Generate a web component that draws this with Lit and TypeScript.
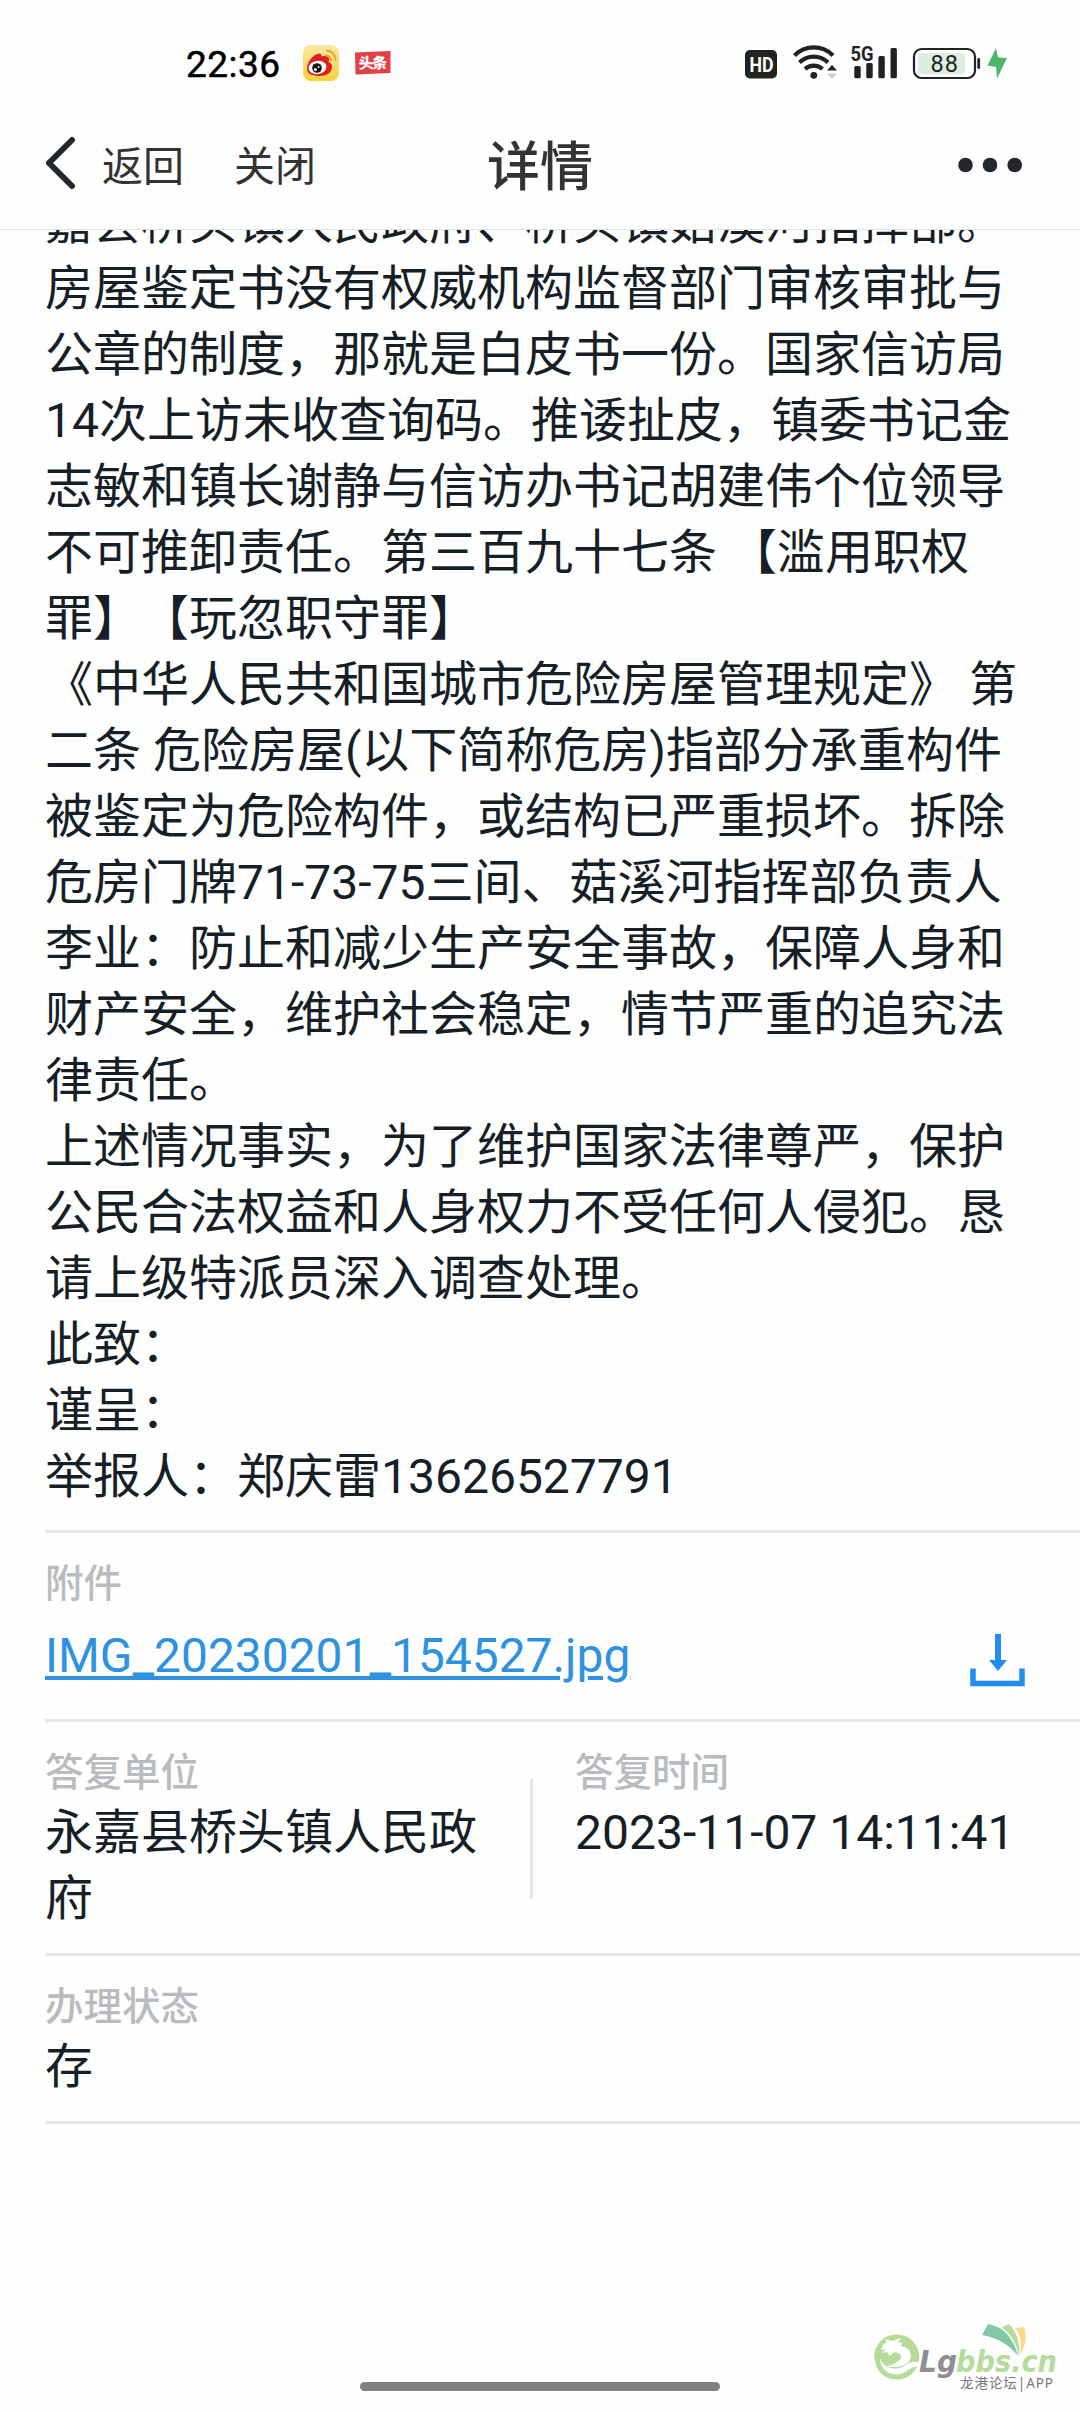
import { LitElement, html, css } from "lit";
import { customElement } from "lit/decorators.js";

const LINES = [
  "嘉县桥头镇人民政府、桥头镇菇溪河指挥部。",
  "房屋鉴定书没有权威机构监督部门审核审批与",
  "公章的制度，那就是白皮书一份。国家信访局",
  "14次上访未收查询码。推诿扯皮，镇委书记金",
  "志敏和镇长谢静与信访办书记胡建伟个位领导",
  "不可推卸责任。第三百九十七条 【滥用职权",
  "罪】【玩忽职守罪】",
  "《中华人民共和国城市危险房屋管理规定》 第",
  "二条 危险房屋(以下简称危房)指部分承重构件",
  "被鉴定为危险构件，或结构已严重损坏。拆除",
  "危房门牌71-73-75三间、菇溪河指挥部负责人",
  "李业：防止和减少生产安全事故，保障人身和",
  "财产安全，维护社会稳定，情节严重的追究法",
  "律责任。",
  "上述情况事实，为了维护国家法律尊严，保护",
  "公民合法权益和人身权力不受任何人侵犯。恳",
  "请上级特派员深入调查处理。",
  "此致：",
  "谨呈：",
  "举报人：郑庆雷13626527791",
];

@customElement("status-bar")
class StatusBar extends LitElement {
  static styles = css`
    :host { display: block; height: 96px; }
    svg { display: block; }
    .t { font-family: Roboto, sans-serif; }
    .cjk { font-family: "Noto Sans CJK SC", sans-serif; font-weight: 900; }
  `;
  render() {
    return html`<svg width="1080" height="96" viewBox="0 0 1080 96">
      <defs>
        <linearGradient id="wb" x1="0" y1="0" x2="0" y2="1">
          <stop offset="0" stop-color="#fbe7a4" /><stop offset="1" stop-color="#fbd03c" />
        </linearGradient>
      </defs>
      <text class="t" x="186" y="77" font-size="37" textLength="94" fill="#000" stroke="#000" stroke-width=".5">22:36</text>
      <rect x="303" y="45" width="36" height="36" rx="8" fill="url(#wb)" />
      <path d="M307 69c0-7 6-14.500 12-15.500 2 0 2.500 1 2.500 3 4-1 7.500-.5 7.500 2.500 0 1 0 2-.5 3 3 1 3.500 3 3.500 5 0 6-6 9-12.500 9S307 74 307 69z" fill="#e02020" />
      <ellipse cx="317.500" cy="67.500" rx="9" ry="6.600" fill="#fff" transform="rotate(-8 317.500 67.500)" />
      <circle cx="317" cy="68" r="4.800" fill="#111" />
      <circle cx="315.400" cy="69.600" r="1.500" fill="#fff" /><circle cx="318.600" cy="67" r=".9" fill="#fff" />
      <path d="M327 50.500a9.500 9.500 0 0 1 8.500 9.500M326 55.500a5 5 0 0 1 5 5" fill="none" stroke="#e5a23a" stroke-width="2" stroke-linecap="round" />
      <path d="M355 52.500 390.500 51V73L355.500 74.500z" fill="#e34046" />
      <text class="cjk" x="358.500" y="68.500" font-size="15" textLength="28.500" fill="#fff" transform="rotate(-1.500 372 63)">头条</text>

      <rect x="745" y="50" width="32" height="28.500" rx="5" fill="#222" />
      <text class="t" x="749.500" y="71.500" font-size="20.500" font-weight="700" textLength="24" lengthAdjust="spacingAndGlyphs" fill="#fff">HD</text>
      <g fill="none" stroke="#222" stroke-width="4.200">
        <path d="M794.500 55.500a27 27 0 0 1 38.500 0" />
        <path d="M799.500 62.500a20 20 0 0 1 28.500 0" />
        <path d="M805 69a13 13 0 0 1 17.500 0" />
      </g>
      <circle cx="813.800" cy="75.300" r="3.400" fill="#222" />
      <path d="M827 70.500 832 65l5 5.500z" fill="#222" /><path d="M827 73.500 832 79l5-5.500z" fill="#ccc" />
      <text class="t" x="850.500" y="61" font-size="20.500" font-weight="700" textLength="23" lengthAdjust="spacingAndGlyphs" fill="#222">5G</text>
      <g fill="#222">
        <rect x="854.300" y="66" width="6.400" height="12.300" rx="1.500" /><rect x="866.300" y="63" width="6.400" height="15.300" rx="1.500" />
        <rect x="878.400" y="56" width="6.400" height="22.300" rx="1.500" /><rect x="890.500" y="48" width="6.400" height="30.300" rx="1.500" />
      </g>
      <rect x="914" y="49" width="61" height="29" rx="7.500" fill="#fff" stroke="#222" stroke-width="2.200" />
      <rect x="918" y="53" width="47" height="21.300" rx="3" fill="#dceee0" />
      <rect x="977.300" y="58" width="2.800" height="11" rx="1.400" fill="#222" />
      <text class="t" x="930.500" y="72" font-size="23.500" textLength="27.500" fill="#222">88</text>
      <path d="M996 48 987.500 65.500 996 67 997 78.500 1007 58 998 57.500z" fill="#4fb56d" />
    </svg>`;
  }
}

@customElement("nav-bar")
class NavBar extends LitElement {
  static styles = css`
    :host {
      display: grid; grid-template-columns: 1fr auto 1fr; align-items: center;
      height: 134px; padding: 0 56px 0 45px; box-sizing: border-box;
      border-bottom: 1px solid #e0e2e2;
      font-family: "Noto Sans CJK SC", sans-serif; color: #333;
    }
    .left { display: flex; align-items: center; font-size: 41px; line-height: 60px; }
    .back { margin-left: 25px; }
    .close { margin-left: 50px; }
    .title { font-size: 53px; line-height: 70px; font-weight: 500; margin-right: -11px; }
    .right { display: flex; justify-content: flex-end; padding-top: 3px; }
    svg { display: block; }
  `;
  render() {
    return html`
      <div class="left">
        <svg width="32" height="54" viewBox="0 0 32 54"><path d="M27 4 4 27 27 50" fill="none" stroke="#23272e" stroke-width="6" stroke-linecap="round" stroke-linejoin="round" /></svg>
        <span class="back">返回</span><span class="close">关闭</span>
      </div>
      <div class="title">详情</div>
      <div class="right">
        <svg width="68" height="17" viewBox="0 0 68 17" fill="#23272e"><circle cx="9.500" cy="9" r="7.300" /><circle cx="34" cy="9" r="7.300" /><circle cx="58.700" cy="9" r="7.300" /></svg>
      </div>`;
  }
}

@customElement("forum-mark")
class ForumMark extends LitElement {
  static styles = css`
    :host { display: block; }
    svg { display: block; }
    .brand { font-family: "DejaVu Sans", sans-serif; font-weight: 700; font-style: italic; }
    .sub { font-family: "Noto Sans", "Noto Sans CJK SC", sans-serif; }
  `;
  render() {
    return html`<svg width="200" height="80" viewBox="0 0 200 80">
      <circle cx="31.700" cy="37" r="22.600" fill="#b5dc9b" />
      <path d="M16 30 18 25 22 22 20 19 27 21 36 18 33 22 38 23 35 26Q45 27 46 35 46 43 37 46 30 48 22 46 34 43 36 38 37 33 29 32L25 36 22 32 17 33 21 29z" fill="#fff" />
      <path d="M53 42Q46 41 41 45 33 50 26 48 18 46 15 38 15 48 24 53 35 57 43 50 47 47 53 46z" fill="#fff" />
      <path d="M10 38Q10 50 18 56 11 52 9 45z" fill="#fff" />
      <text class="brand" x="54" y="51.500" font-size="31" textLength="38" lengthAdjust="spacingAndGlyphs" fill="#8d8f92">Lg</text>
      <text class="brand" x="91" y="51.500" font-size="31" textLength="101" lengthAdjust="spacingAndGlyphs" fill="#b5dc9b">bbs.cn</text>
      <path d="M117 15 123 4Q146 8 153 36 140 19 117 15z" fill="#82c8a2" />
      <path d="M137 7 144 4Q156 16 154 37 151 18 137 7z" fill="#b5dc9b" />
      <path d="M150 8 159 7Q164 20 155 35 158 18 150 8z" fill="#fbd98a" />
      <text class="sub" x="95" y="67.500" font-size="13.500" textLength="93" fill="#77797c">龙港论坛|APP</text>
    </svg>`;
  }
}

@customElement("app-root")
class AppRoot extends LitElement {
  static styles = css`
    :host {
      display: flex; flex-direction: column; position: relative;
      height: 2412px; overflow: hidden; background: #fefefe;
      font-family: Roboto, "Noto Sans CJK SC", sans-serif;
      text-spacing-trim: space-all; color: #161f27;
    }
    .scroll { flex: 1; overflow: hidden; padding-left: 45px; }
    .article { margin-top: -40px; padding-bottom: 20px; font-size: 48px; line-height: 66px; }
    .line { height: 66px; white-space: pre; }
    .section { border-top: 3px solid #e6e6e6; padding: 24px 0 21px; }
    .last { border-bottom: 3px solid #e6e6e6; }
    .label { font-size: 38.500px; line-height: 54px; height: 54px; color: #b9bcbf; font-weight: 500; }
    .value { font-size: 48px; line-height: 66px; }
    .file { display: flex; justify-content: space-between; align-items: center; padding: 12px 54px 9px 0; height: 66px; }
    .file svg { margin-top: 7px; }
    .link { font-size: 47.900px; color: #2f92e0; text-decoration: underline; text-decoration-thickness: 4px; text-underline-offset: 4px; }
    .cols { display: flex; align-items: center; }
    .unit { width: 485px; box-sizing: border-box; padding-right: 40px; }
    .bar { width: 3px; height: 120px; background: #e6e6e6; }
    .time { align-self: flex-start; margin-left: 42px; }
    .home { align-self: center; width: 360px; height: 9px; border-radius: 5px; background: #808080; margin-bottom: 21px; }
    .mark { position: absolute; left: 865px; top: 2320px; }
    svg { display: block; }
  `;
  render() {
    return html`
      <status-bar></status-bar>
      <nav-bar></nav-bar>
      <div class="scroll">
        <div class="article">${LINES.map((l) => html`<div class="line">${l}</div>`)}</div>
        <div class="section">
          <div class="label">附件</div>
          <div class="file">
            <span class="value link">IMG_20230201_154527.jpg</span>
            <svg width="56" height="54" viewBox="0 0 56 54"><path d="M28 1V30" stroke="#228df0" stroke-width="6" /><path d="M19 27H37L28 38z" fill="#228df0" /><path d="M3 35.500V50.500H52V35.500" fill="none" stroke="#228df0" stroke-width="5.500" /></svg>
          </div>
        </div>
        <div class="section cols">
          <div class="unit"><div class="label">答复单位</div><div class="value">永嘉县桥头镇人民政府</div></div>
          <div class="bar"></div>
          <div class="time"><div class="label">答复时间</div><div class="value">2023-11-07 14:11:41</div></div>
        </div>
        <div class="section last">
          <div class="label">办理状态</div>
          <div class="value">存</div>
        </div>
      </div>
      <div class="home"></div>
      <forum-mark class="mark"></forum-mark>`;
  }
}
